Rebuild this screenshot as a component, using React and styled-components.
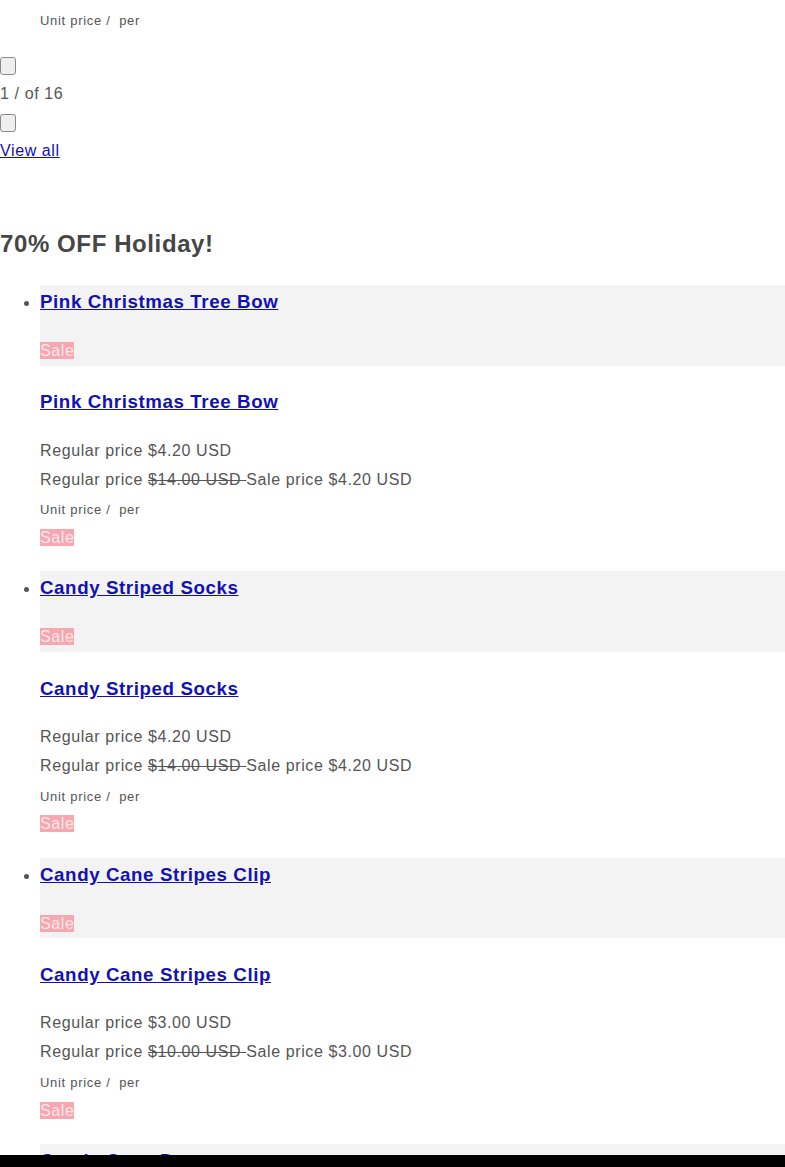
import React from "react";
import styled, { createGlobalStyle } from "styled-components";

const Global = createGlobalStyle`
  html, body { margin: 0; padding: 0; background: #fff; }
  body {
    font-family: "Liberation Sans", Arial, sans-serif;
    font-size: 16px;
    line-height: 1.8;
    letter-spacing: 0.6px;
    color: #555555;
  }
`;

const Page = styled.div`
  padding-top: 6px;
  padding-bottom: 40px;
`;

const List = styled.ul`
  margin: 0 0 ${(p) => p.$mb || 0}px;
  padding-left: 40px;
  list-style: ${(p) => (p.$plain ? "none" : "disc")};
`;

const Item = styled.li`
  margin-bottom: ${(p) => (p.$last ? 0 : 18.6)}px;
`;

const Card = styled.div`
  background: #f3f3f3;
`;

const Title = styled.h3`
  margin: ${(p) => (p.$inCard ? "0 0 18px" : "19.7px 0 17.7px")};
  font-size: 18.72px;
  line-height: 1.8;
  font-weight: 700;
  letter-spacing: 0.6px;
`;

const Link = styled.a`
  color: #1111b4;
  text-decoration: underline;
`;

const Line = styled.div`
  margin-top: ${(p) => p.$mt || 0}px;
`;

const Strike = styled.s`
  text-decoration: line-through;
`;

const Small = styled.small`
  font-size: 13px;
  letter-spacing: 0.7px;
`;

const Badge = styled.span`
  background: #f6a7af;
  color: #fde6e8;
`;

const NavButton = styled.button`
  display: inline-block;
  vertical-align: middle;
  width: 16px;
  height: 18px;
  padding: 0;
  margin: 0;
  background: #efefef;
  border: 1px solid #8a8a8a;
  border-radius: 3px;
`;

const Counter = styled.div`
  color: #555;
`;

const Heading = styled.h2`
  margin: 55.6px 0 20.4px;
  font-size: 24px;
  line-height: 1.8;
  font-weight: 700;
  color: #464646;
`;

const BottomBar = styled.div`
  position: fixed;
  left: 0;
  right: 0;
  bottom: 0;
  height: 12px;
  background: #000;
`;

const products = [
  { name: "Pink Christmas Tree Bow", price: "$4.20 USD", was: "$14.00 USD" },
  { name: "Candy Striped Socks", price: "$4.20 USD", was: "$14.00 USD" },
  { name: "Candy Cane Stripes Clip", price: "$3.00 USD", was: "$10.00 USD" },
  { name: "Candy Cane Dress", price: "$4.20 USD", was: "$14.00 USD" },
];

function Product({ p, last }) {
  return (
    <Item $last={last}>
      <Card>
        <Title $inCard>
          <Link href="#">{p.name}</Link>
        </Title>
        <Line>
          <Badge>Sale</Badge>
        </Line>
      </Card>
      <Title>
        <Link href="#">{p.name}</Link>
      </Title>
      <Line>Regular price {p.price}</Line>
      <Line>
        Regular price <Strike>{p.was} </Strike>Sale price {p.price}
      </Line>
      <Line $mt={1}>
        <Small>Unit price /&nbsp; per</Small>
      </Line>
      <Line>
        <Badge>Sale</Badge>
      </Line>
    </Item>
  );
}

export default function App() {
  return (
    <>
      <Global />
      <Page>
        <List $mb={16} $plain>
          <li>
            <Line>
              <Small>Unit price /&nbsp; per</Small>
            </Line>
          </li>
        </List>
        <Line>
          <NavButton aria-label="Previous slide" />
        </Line>
        <Counter>1 / of 16</Counter>
        <Line>
          <NavButton aria-label="Next slide" />
        </Line>
        <Link href="#">View all</Link>
        <Heading>70% OFF Holiday!</Heading>
        <List>
          {products.map((p, i) => (
            <Product key={p.name} p={p} last={i === products.length - 1} />
          ))}
        </List>
      </Page>
      <BottomBar />
    </>
  );
}
